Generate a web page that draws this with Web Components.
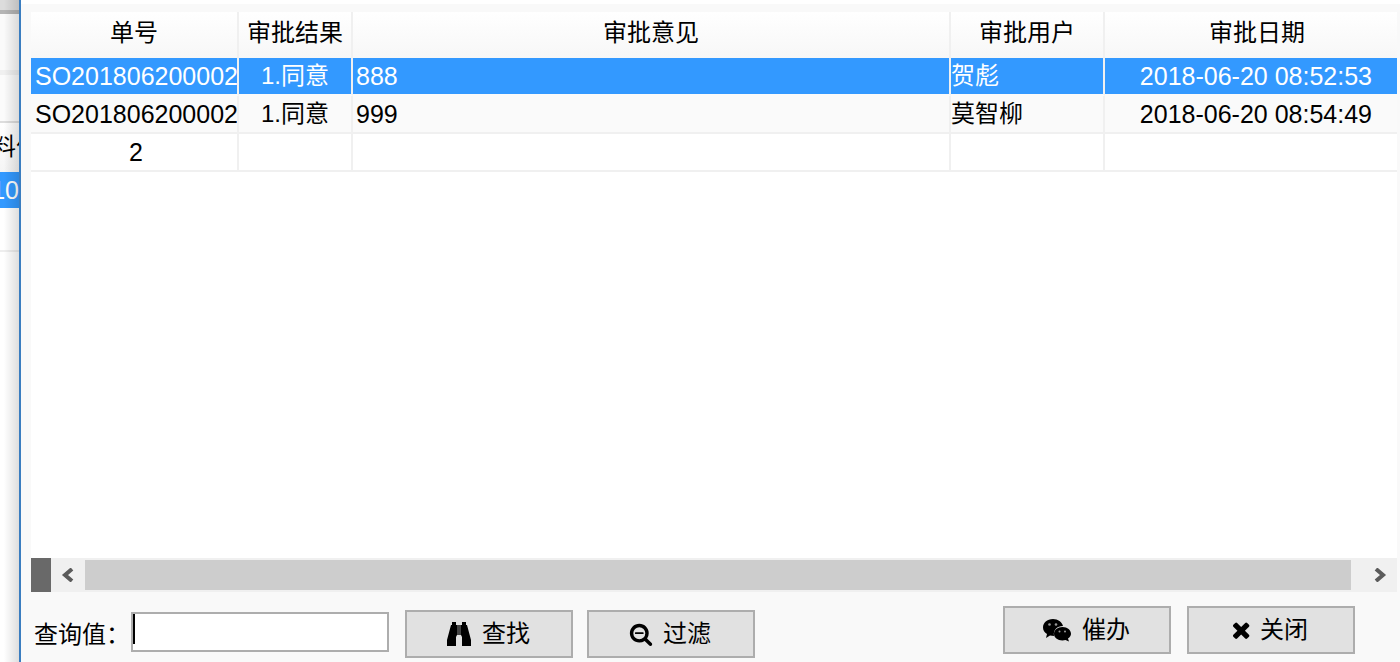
<!DOCTYPE html>
<html lang="zh-CN">
<head>
<meta charset="utf-8">
<title>审批记录</title>
<style>
html, body { height: 100%; margin: 0; }
body { font-family: "Liberation Sans", "Noto Sans CJK SC", sans-serif; font-size: 24px; color: #000; background: #fff; overflow: hidden; }
</style>
</head>
<body>
<approval-screen></approval-screen>
<script>
function define(name, html, setup) {
  const template = document.createElement('template');
  template.innerHTML = html;
  customElements.define(name, class extends HTMLElement {
    constructor() {
      super();
      this.attachShadow({ mode: 'open' }).append(template.content.cloneNode(true));
    }
    connectedCallback() { if (setup) setup(this, this.shadowRoot); }
  });
}

// Sliver of the order window that stays visible behind the dialog
define('back-window', `
<style>
:host { display: flex; flex-direction: column; overflow: hidden; position: relative; background: #fff; white-space: nowrap; }
.title { height: 10px; background: #dcdcdc; border-bottom: 4px solid #b4b4b4; }
.bar { height: 56px; background: #fafafa; border-bottom: 5px solid #f0f0f0; }
.tools { height: 46px; background: #fbfbfb; border-bottom: 2px solid #ddd; }
.head { height: 49px; line-height: 48px; display: flex; background: linear-gradient(#fff, #f5f5f5); }
.head span { margin-left: -8px; }
.sel { height: 36px; line-height: 36px; background: #39f; color: #fff; display: flex; justify-content: flex-end; font-size: 25px; }
.row { height: 42px; border-bottom: 2px solid #eee; }
.shade { position: absolute; inset: 0; background: linear-gradient(90deg, transparent 20%, rgba(0,0,0,.13)); }
</style>
<div class="title"></div><div class="bar"></div><div class="tools"></div>
<div class="head"><span>料件</span></div>
<div class="sel"><span>10</span></div>
<div class="row"></div>
<div class="shade"></div>`);

define('approval-grid', `
<style>
:host { display: block; background: #fff; overflow: hidden; }
table { width: 100%; table-layout: fixed; border-collapse: separate; border-spacing: 0; }
col.no { width: 208px; } col.result { width: 114px; } col.user { width: 154px; } col.date { width: 292px; }
th, td { box-sizing: border-box; padding: 0; border-right: 2px solid #f0f0f0; white-space: nowrap; overflow: hidden; }
th:last-child, td:last-child { border-right: 0; }
th:last-child { padding-left: 12px; }
th { height: 46px; font-weight: 400; line-height: 42px; padding-bottom: 4px; background: linear-gradient(#fff, #f7f7f7); }
td { height: 38px; line-height: 36px; border-bottom: 2px solid #f0f0f0; }
.latin { font-size: 25px; }
.no { text-align: left; padding-left: 4px; }
.mid { text-align: center; }
.comment { padding-left: 3px; }
.date { text-align: right; padding-right: 25px; }
tbody tr:nth-child(2) td { background: #fafafa; }
tbody tr.selected td { background: #39f; color: #fff; border-bottom-color: #fafafa; }
tfoot td:first-child { text-align: center; padding-left: 4px; }
</style>
<table>
<colgroup><col class="no"><col class="result"><col><col class="user"><col class="date"></colgroup>
<thead><tr><th>单号</th><th>审批结果</th><th>审批意见</th><th>审批用户</th><th>审批日期</th></tr></thead>
<tbody></tbody>
<tfoot><tr><td class="latin">2</td><td></td><td></td><td></td><td></td></tr></tfoot>
</table>`, (host, root) => {
  const rows = [
    ['SO201806200002', '1.同意', '888', '贺彪', '2018-06-20 08:52:53'],
    ['SO201806200002', '1.同意', '999', '莫智柳', '2018-06-20 08:54:49']
  ];
  const kinds = ['latin no', 'mid', 'latin comment', 'user', 'latin date'];
  const body = root.querySelector('tbody');
  rows.forEach((row, i) => {
    const tr = body.insertRow();
    if (i === 0) tr.className = 'selected';
    row.forEach((text, k) => {
      const td = tr.insertCell();
      td.className = kinds[k];
      td.textContent = text;
    });
  });
});

define('scroll-strip', `
<style>
:host { display: flex; align-items: center; height: 34px; background: #f0f0f0; }
.split { width: 20px; height: 34px; background: #696969; }
button { border: 0; padding: 0; background: none; width: 34px; height: 34px; display: flex; align-items: center; justify-content: center; }
button.right { width: 46px; padding-left: 12px; }
.thumb { flex: 1; height: 30px; background: #cdcdcd; }
svg { width: 14px; height: 14px; fill: none; stroke: #5b5b5b; stroke-width: 4; }
</style>
<div class="split"></div>
<button aria-label="向左滚动"><svg viewBox="0 0 14 14"><path d="M11 1L4 7l7 6"/></svg></button>
<div class="thumb"></div>
<button class="right" aria-label="向右滚动"><svg viewBox="0 0 14 14"><path d="M3 1l7 6-7 6"/></svg></button>`);

const icons = {
  find: [26, 26, '<path d="M6 1h4v3H6zM16 1h4v3h-4zM5 4h6v10l-1 2v9H1v-6zM15 4h6l4 15v6h-9v-9l-1-2z"/><path fill="#444" d="M11 4h4v10h-4z"/>'],
  filter: [24, 24, '<path transform="scale(.0134)" d="M1088 800v64q0 13-9.500 22.500t-22.500 9.500h-576q-13 0-22.500-9.500t-9.500-22.500v-64q0-13 9.500-22.500t22.500-9.500h576q13 0 22.500 9.500t9.500 22.500zm128 32q0-185-131.500-316.500t-316.500-131.500-316.500 131.500-131.500 316.500 131.500 316.500 316.500 131.500 316.500-131.500 131.500-316.500zm512 832q0 53-37.500 90.500t-90.500 37.500q-54 0-90-38l-343-342q-179 124-399 124-143 0-273.500-55.500t-225-150-150-225-55.500-273.500 55.500-273.500 150-225 225-150 273.500-55.500 273.500 55.500 225 150 150 225 55.500 273.500q0 220-124 399l343 343q37 37 37 90z"/>'],
  urge: [30, 24, '<path d="M11 1C5 1 1 5 1 9.500c0 3 1.500 5 4 6.500l-1 4 4-2.500 4 .500c-1-6 3-10 9-10C20 4 16 1 11 1z"/><path d="M20.500 9c-5 0-8.500 3-8.500 6.800s3.500 6.700 8.500 6.700l3-.500 3.500 1.500-1-3c2-1.200 3-2.900 3-4.700C29 12 25.500 9 20.500 9z"/><g fill="#999"><circle cx="7.500" cy="6.500" r="1.300"/><circle cx="14" cy="6.500" r="1.300"/><circle cx="17.500" cy="13.500" r="1"/><circle cx="23" cy="13.500" r="1"/></g>'],
  close: [18, 24, '<path transform="translate(-3.200 -.500) scale(.0138)" d="M1490 1322q0 40-28 68l-136 136q-28 28-68 28t-68-28l-294-294-294 294q-28 28-68 28t-68-28l-136-136q-28-28-28-68t28-68l294-294-294-294q-28-28-28-68t28-68l136-136q28-28 68-28t68 28l294 294 294-294q28-28 68-28t68 28l136 136q28 28 28 68t-28 68l-294 294 294 294q28 28 28 68z"/>']
};
define('tool-button', `
<style>
:host { display: block; }
button { box-sizing: border-box; width: 168px; height: 48px; padding: 0 2px 0 0; border: 2px solid #adadad; background: #e1e1e1; color: #000; font: inherit; line-height: 40px; display: flex; align-items: center; justify-content: center; gap: 10px; }
svg { display: block; }
</style>
<button type="button"><svg aria-hidden="true"></svg><span><slot></slot></span></button>`, (host, root) => {
  const [w, h, art] = icons[host.getAttribute('icon')];
  const svg = root.querySelector('svg');
  svg.setAttribute('width', w);
  svg.setAttribute('height', h);
  svg.setAttribute('viewBox', `0 0 ${w} ${h}`);
  svg.innerHTML = art;
});

define('search-field', `
<style>
:host { display: flex; align-items: center; height: 44px; }
label { width: 97px; white-space: nowrap; }
input { box-sizing: border-box; width: 258px; height: 40px; padding: 0 4px; border: 2px solid #adadad; border-radius: 0; outline: 0; font: inherit; caret-color: transparent; background: linear-gradient(#000, #000) 0 0 / 2px 30px no-repeat #fff; }
</style>
<label for="q"><slot></slot></label><input id="q" type="text">`);

define('action-bar', `
<style>
:host { display: flex; justify-content: space-between; align-items: flex-start; height: 70px; box-sizing: border-box; padding: 14px 42px 0 3px; }
.search, .actions { display: flex; gap: 16px; }
.search { padding-top: 4px; gap: 14px; }
search-field { padding-right: 2px; }
</style>
<div class="search"><search-field>查询值：</search-field><tool-button icon="find">查找</tool-button><tool-button icon="filter">过滤</tool-button></div>
<div class="actions"><tool-button icon="urge">催办</tool-button><tool-button icon="close">关闭</tool-button></div>`);

define('approval-dialog', `
<style>
:host { display: flex; flex-direction: column; box-sizing: border-box; border-left: 2px solid #3a7dc0; background: linear-gradient(#fff, #fff) 0 0 / 100% 4px no-repeat #f9f9f9; padding: 12px 3px 0 10px; }
approval-grid { flex: 1; min-height: 0; }
</style>
<approval-grid></approval-grid><scroll-strip></scroll-strip><action-bar></action-bar>`);

define('approval-screen', `
<style>
:host { display: flex; height: 100vh; }
back-window { width: 19px; flex: none; }
approval-dialog { flex: 1; min-width: 0; }
</style>
<back-window></back-window><approval-dialog></approval-dialog>`);
</script>
</body>
</html>
